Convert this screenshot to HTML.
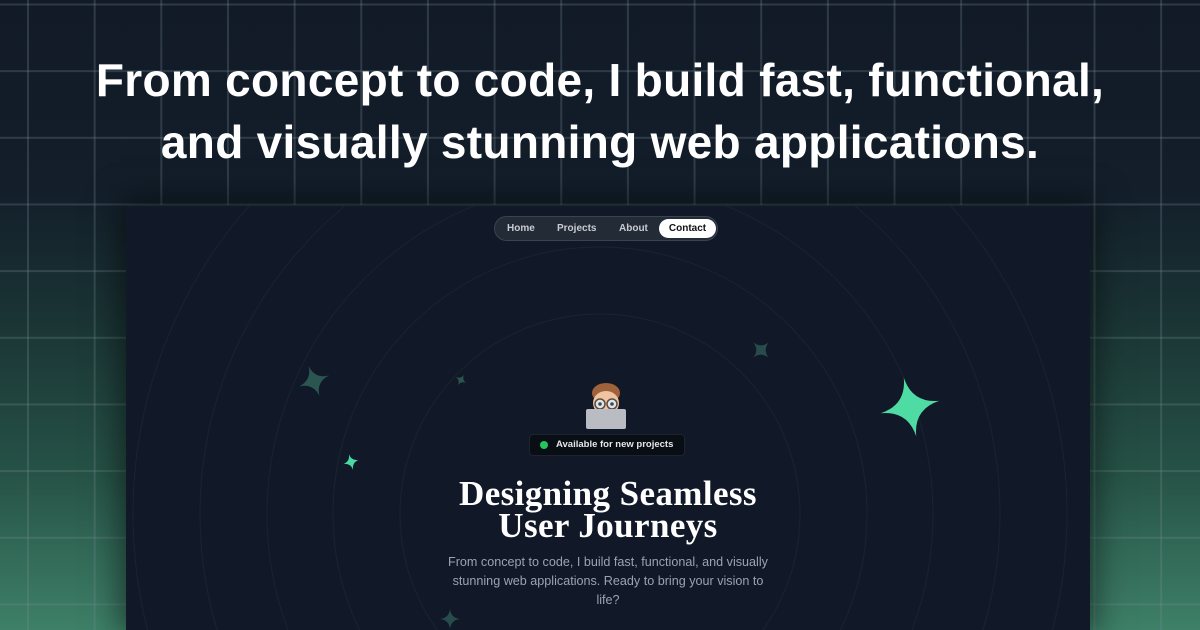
<!DOCTYPE html>
<html><head><meta charset="utf-8"><style>
*{margin:0;padding:0;box-sizing:border-box}
html,body{width:1200px;height:630px;overflow:hidden}
body{position:relative;font-family:"Liberation Sans",sans-serif;
background:linear-gradient(180deg,#111a26 0%,#131e2a 30%,#1a3334 50%,#265246 75%,#3e8068 100%);}
.grid{position:absolute;inset:0;
background-image:linear-gradient(90deg,rgba(120,140,150,.28) 2px,transparent 2px),linear-gradient(180deg,rgba(120,140,150,.28) 2px,transparent 2px);
background-size:66.67px 66.67px;background-position:27px 3.5px;}
h1{position:absolute;top:49px;left:0;width:1200px;text-align:center;color:#fff;font-size:46px;line-height:62px;font-weight:700;letter-spacing:.3px}
.frame{position:absolute;left:126px;top:205px;width:964px;height:425px;background:#111827;overflow:hidden;
box-shadow:0 0 30px 6px rgba(0,0,0,.5);border-top:1px solid #1f2733}
.nav{position:absolute;left:368px;top:10px;width:224px;height:25px;border-radius:13px;background:#232b37;border:1px solid #3a4350;font-size:10px;color:#c8ccd2;font-weight:700}
.nav span{position:absolute;top:6px}
.nav .c{left:164px;top:2px;width:57px;height:19px;border-radius:10px;background:#fff;color:#111;text-align:center;line-height:19px}
.badge{position:absolute;left:403px;top:228px;width:156px;height:22px;border-radius:4px;background:#090d14;border:1px solid #1d2430;color:#e5e7eb;font-size:9.5px;font-weight:700;line-height:20px;padding-left:26px}
.badge:before{content:"";position:absolute;left:10px;top:6px;width:8px;height:8px;border-radius:50%;background:#22c55e}
h2{position:absolute;left:0;width:964px;top:272px;text-align:center;color:#fff;font-family:"Liberation Serif",serif;font-weight:700;font-size:35px;line-height:32px;letter-spacing:.4px}
p{position:absolute;left:312px;width:340px;top:347px;text-align:center;color:#9ca3af;font-size:12.6px;line-height:19px;padding:0 4px}
</style></head><body>
<div class="grid"></div>
<h1>From concept to code, I build fast, functional,<br>and visually stunning web applications.</h1>
<div class="frame">
<svg width="964" height="430" style="position:absolute;left:0;top:0">
<g fill="none" stroke="#19222f" stroke-width="1.2">
<circle cx="474" cy="308" r="467"/><circle cx="474" cy="308" r="400"/><circle cx="474" cy="308" r="333"/><circle cx="474" cy="308" r="267"/><circle cx="474" cy="308" r="200"/>
</g>
<defs><path id="s" d="M0,-1 Q0.1,-0.1 1,0 Q0.1,0.1 0,1 Q-0.1,0.1 -1,0 Q-0.1,-0.1 0,-1Z"/></defs>
<use href="#s" transform="translate(784,201) rotate(-12) scale(30)" fill="#4fdca4"/>
<use href="#s" transform="translate(188,175) rotate(-20) scale(16)" fill="#2a5550"/>
<use href="#s" transform="translate(635,144) rotate(45) scale(11)" fill="#284c4c"/>
<use href="#s" transform="translate(335,174) rotate(30) scale(6)" fill="#2a5550"/>
<use href="#s" transform="translate(225,256) rotate(-15) scale(8)" fill="#4ad9a0"/>
<use href="#s" transform="translate(324,413) rotate(0) scale(10)" fill="#284c4c"/>
</svg>
<div class="nav"><span style="left:12px">Home</span><span style="left:62px">Projects</span><span style="left:124px">About</span><span class="c">Contact</span></div>
<svg width="50" height="50" style="position:absolute;left:455px;top:175px">
<ellipse cx="25" cy="12" rx="14" ry="10" fill="#a0623a"/>
<ellipse cx="25" cy="22" rx="13" ry="12" fill="#f0c4a0"/>
<circle cx="19" cy="23" r="5" fill="#dfe6ea" stroke="#5a4a3e" stroke-width="1.5"/>
<circle cx="31" cy="23" r="5" fill="#dfe6ea" stroke="#5a4a3e" stroke-width="1.5"/>
<circle cx="19" cy="23" r="1.8" fill="#3a4a5a"/><circle cx="31" cy="23" r="1.8" fill="#3a4a5a"/>
<rect x="5" y="28" width="40" height="20" rx="2" fill="#b9bcc2"/>
</svg>
<div class="badge">Available for new projects</div>
<h2>Designing Seamless<br>User Journeys</h2>
<p>From concept to code, I build fast, functional, and visually stunning web applications. Ready to bring your vision to life?</p>
</div>
</body></html>
